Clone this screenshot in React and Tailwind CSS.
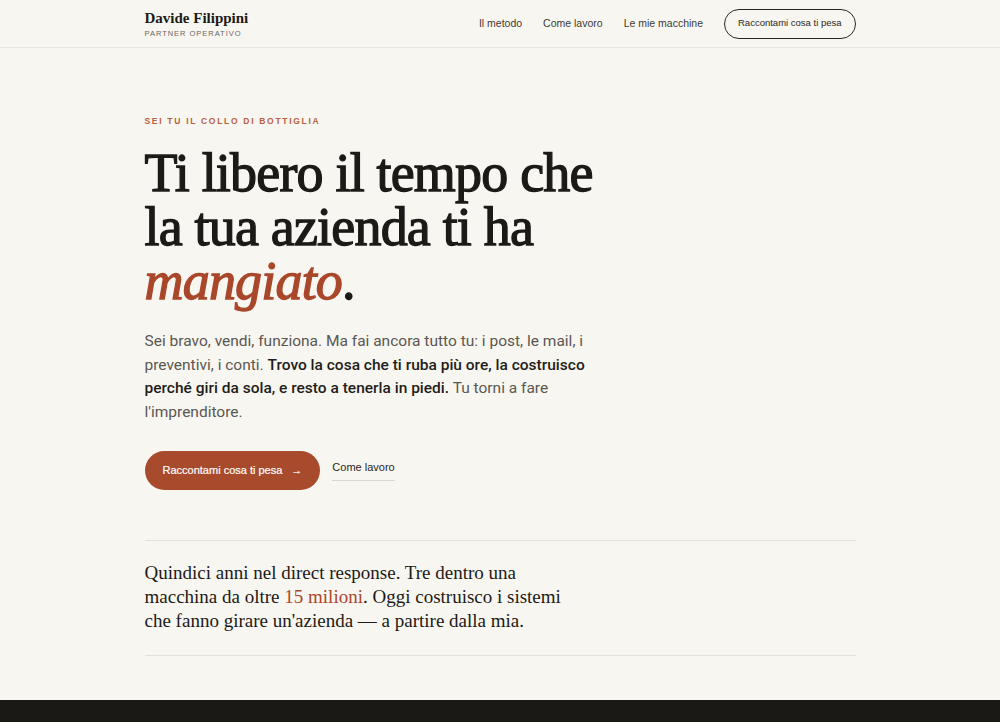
import React from 'react';

const serif = { fontFamily: '"Liberation Serif", "DejaVu Serif", serif' };
const sans = { fontFamily: '"Liberation Sans", Arial, sans-serif' };
const body = { fontFamily: 'Roboto, "Liberation Sans", Arial, sans-serif' };

const navLinks = ['Il metodo', 'Come lavoro', 'Le mie macchine'];

// Barra in alto: nome, sottotitolo, link e bottone contatto
const Header = () => (
    <header className="h-[48px] border-b border-[#ebe7df]">
        <div className="max-w-[711px] mx-auto h-full flex items-center justify-between">
            <div>
                <div style={serif} className="text-[15px] leading-[18px] font-bold text-[#1c1a17]">Davide Filippini</div>
                <div style={sans} className="mt-[3px] text-[7.5px] leading-[8px] tracking-[0.13em] text-[#6b665e]">PARTNER OPERATIVO</div>
            </div>
            <nav style={sans} className="flex items-center">
                {navLinks.map(link => (
                    <a key={link} href="#" className="text-[10.5px] text-[#3d3a35] mr-[21px]">{link}</a>
                ))}
                <a href="#" className="h-[30px] px-[13px] flex items-center rounded-full border border-[#2a2723] text-[9.5px] text-[#2a2723]">
                    Raccontami cosa ti pesa
                </a>
            </nav>
        </div>
    </header>
);

// Sezione principale con titolo e call to action
const Hero = () => (
    <section className="max-w-[711px] mx-auto pt-[67px] pb-[50px]">
        <p style={sans} className="text-[8.5px] leading-[12px] font-bold tracking-[0.2em] text-[#b8603f]">SEI TU IL COLLO DI BOTTIGLIA</p>
        <h1 style={serif} className="mt-[19px] text-[54px] leading-[54px] tracking-[-0.015em] text-[#1c1a17] [-webkit-text-stroke:1.3px]">
            Ti libero il tempo che<br />
            la tua azienda ti ha<br />
            <em className="text-[#a9472a]">mangiato</em>.
        </h1>
        <p style={body} className="mt-[22px] max-w-[500px] text-[15.5px] leading-[23.5px] text-[#5b5751]">
            Sei bravo, vendi, funziona. Ma fai ancora tutto tu: i post, le mail, i<br />
            preventivi, i conti. <span className="font-medium text-[#1f1d1a]">Trovo la cosa che ti ruba più ore, la costruisco<br />
            perché giri da sola, e resto a tenerla in piedi.</span> Tu torni a fare<br />
            l'imprenditore.
        </p>
        <div style={sans} className="mt-[27px] flex items-center gap-[12px]">
            <a href="#" className="h-[39px] px-[18px] flex items-center rounded-full bg-[#a84a2c] text-[11px] text-white [-webkit-text-stroke:0.2px]">
                Raccontami cosa ti pesa<span className="ml-[9px]">→</span>
            </a>
            <a href="#" className="pb-[5px] border-b border-[#ddd8cf] text-[11px] text-[#2a2723] -mt-[1px]">Come lavoro</a>
        </div>
    </section>
);

// Breve presentazione tra due linee
const Intro = () => (
    <section className="max-w-[711px] mx-auto border-t border-b border-[#e4e0d8] pt-[20px] pb-[22px]">
        <p style={serif} className="max-w-[480px] text-[19px] leading-[24px] text-[#1c1a17]">
            Quindici anni nel direct response. Tre dentro una<br />
            macchina da oltre <span className="text-[#a9472a]">15 milioni</span>. Oggi costruisco i sistemi<br />
            che fanno girare un'azienda — a partire dalla mia.
        </p>
    </section>
);

export default function App() {
    return (
        <div className="min-h-screen bg-[#f8f6f1]">
            <Header />
            <Hero />
            <Intro />
            <div className="h-[44px]" />
            <footer className="h-[200px] bg-[#1b1915]" />
        </div>
    );
}
